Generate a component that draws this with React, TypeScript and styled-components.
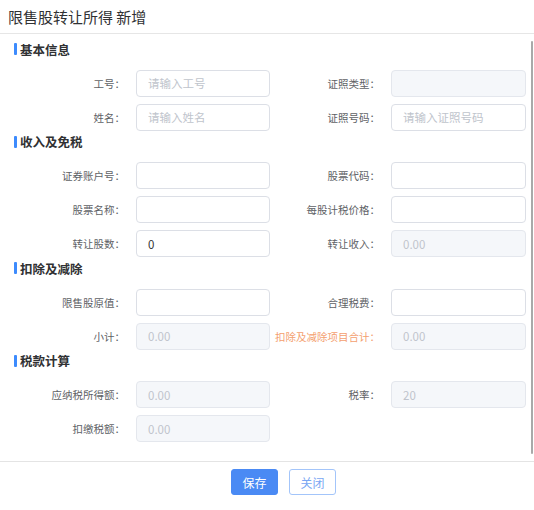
import React from "react";
import styled, { createGlobalStyle } from "styled-components";

const GlobalStyle = createGlobalStyle`
  html, body {
    margin: 0;
    padding: 0;
    background: #ffffff;
  }
  body {
    font-family: "Noto Sans CJK SC", "Noto Sans", sans-serif;
  }
`;

type Field = {
  label: string;
  placeholder?: string;
  value?: string;
  disabled?: boolean;
  warn?: boolean;
};

type Section = {
  title: string;
  rows: [Field, Field | null][];
};

const sections: Section[] = [
  {
    title: "基本信息",
    rows: [
      [
        { label: "工号：", placeholder: "请输入工号" },
        { label: "证照类型：", disabled: true },
      ],
      [
        { label: "姓名：", placeholder: "请输入姓名" },
        { label: "证照号码：", placeholder: "请输入证照号码" },
      ],
    ],
  },
  {
    title: "收入及免税",
    rows: [
      [{ label: "证券账户号：" }, { label: "股票代码：" }],
      [{ label: "股票名称：" }, { label: "每股计税价格：" }],
      [
        { label: "转让股数：", value: "0" },
        { label: "转让收入：", value: "0.00", disabled: true },
      ],
    ],
  },
  {
    title: "扣除及减除",
    rows: [
      [{ label: "限售股原值：" }, { label: "合理税费：" }],
      [
        { label: "小计：", value: "0.00", disabled: true },
        { label: "扣除及减除项目合计：", value: "0.00", disabled: true, warn: true },
      ],
    ],
  },
  {
    title: "税款计算",
    rows: [
      [
        { label: "应纳税所得额：", value: "0.00", disabled: true },
        { label: "税率：", value: "20", disabled: true },
      ],
      [{ label: "扣缴税额：", value: "0.00", disabled: true }, null],
    ],
  },
];

const App = () => {
  return (
    <Dialog>
      <GlobalStyle />
      <Header>限售股转让所得 新增</Header>
      <Body>
        {sections.map((section) => (
          <SectionBlock key={section.title}>
            <SectionTitle>{section.title}</SectionTitle>
            <Rows>
              {section.rows.map((row, i) => (
                <FormRow key={i}>
                  {row.map((field, j) =>
                    field ? (
                      <React.Fragment key={j}>
                        <Label $warn={field.warn}>{field.label}</Label>
                        <Input
                          placeholder={field.placeholder}
                          defaultValue={field.value}
                          disabled={field.disabled}
                        />
                      </React.Fragment>
                    ) : null
                  )}
                </FormRow>
              ))}
            </Rows>
          </SectionBlock>
        ))}
        <ScrollThumb />
      </Body>
      <Footer>
        <PrimaryButton>保存</PrimaryButton>
        <PlainButton>关闭</PlainButton>
      </Footer>
    </Dialog>
  );
};

export default App;

const Dialog = styled.div`
  width: 534px;
  height: 510px;
  display: flex;
  flex-direction: column;
  background: #fff;
`;

const Header = styled.div`
  height: 33px;
  line-height: 33px;
  padding-left: 8px;
  font-size: 15px;
  color: #303133;
  border-bottom: 1px solid #e6e6e6;
`;

const Body = styled.div`
  position: relative;
  height: 428px;
  padding-top: 4px;
  box-sizing: border-box;
  border-bottom: 1px solid #e4e4e4;
`;

const SectionBlock = styled.div`
  display: flex;
  flex-direction: column;
`;

const SectionTitle = styled.div`
  display: flex;
  align-items: center;
  height: 22px;
  margin-bottom: 9.5px;
  padding-left: 14px;
  font-size: 12.5px;
  font-weight: 700;
  color: #303133;

  &::before {
    content: "";
    width: 3px;
    height: 12px;
    margin-right: 3px;
    border-radius: 1px;
    background: #3d8bfd;
  }
`;

const Rows = styled.div`
  display: flex;
  flex-direction: column;
  gap: 7px;
`;

const FormRow = styled.div`
  display: grid;
  grid-template-columns: 136px 134px 121px 135px;
  align-items: center;
  height: 27px;
`;

const Label = styled.label<{ $warn?: boolean }>`
  text-align: right;
  padding-right: 11px;
  font-size: 10.5px;
  color: ${(p) => (p.$warn ? "#f4a06f" : "#606266")};
  white-space: nowrap;
`;

const Input = styled.input`
  box-sizing: border-box;
  width: 100%;
  height: 27px;
  padding: 0 11px;
  border: 1px solid #dcdfe6;
  border-radius: 4px;
  background: #fff;
  font-family: inherit;
  font-size: 11.5px;
  color: #333;
  outline: none;

  &::placeholder {
    color: #c0c4cc;
  }

  &:disabled {
    background: #f5f7fa;
    border-color: #e4e7ed;
    color: #c0c4cc;
  }
`;

const ScrollThumb = styled.div`
  position: absolute;
  right: 1px;
  top: 7px;
  width: 2px;
  height: 413px;
  background: #a9a9a9;
  border-radius: 1px;
`;

const Footer = styled.div`
  display: flex;
  gap: 11px;
  padding: 7px 0 0 231px;
`;

const PrimaryButton = styled.button`
  width: 47px;
  height: 26px;
  border: 1px solid #4a8af4;
  border-radius: 3px;
  background: #4a8af4;
  color: #fff;
  font-family: inherit;
  font-size: 12px;
  cursor: pointer;
`;

const PlainButton = styled(PrimaryButton)`
  border-color: #a3c5fa;
  background: #fff;
  color: #7aa7f3;
`;
